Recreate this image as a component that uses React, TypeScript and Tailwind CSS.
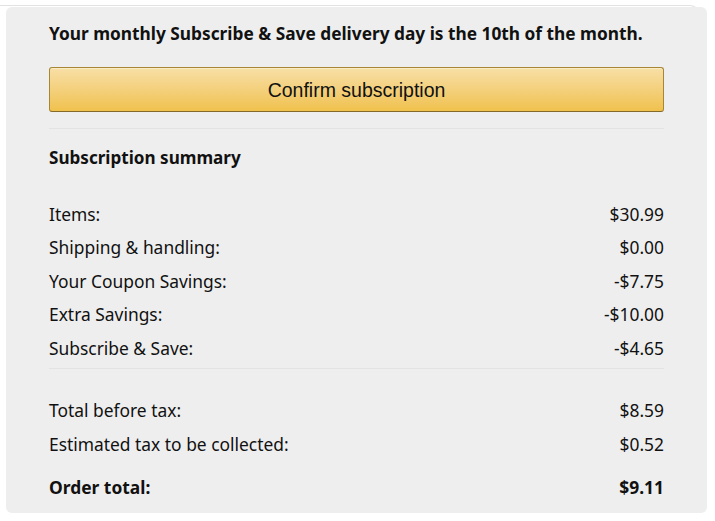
import React from 'react';

const rows = [
  { label: 'Items:', value: '$30.99' },
  { label: 'Shipping & handling:', value: '$0.00' },
  { label: 'Your Coupon Savings:', value: '-$7.75' },
  { label: 'Extra Savings:', value: '-$10.00' },
  { label: 'Subscribe & Save:', value: '-$4.65' },
];

const totals = [
  { label: 'Total before tax:', value: '$8.59' },
  { label: 'Estimated tax to be collected:', value: '$0.52' },
];

const App: React.FC = () => {
  return (
    <div className="w-[715px] h-[521px] bg-white overflow-hidden relative font-['Noto_Sans',sans-serif] text-[#111]">
      {/* outer frame edge */}
      <div className="absolute left-0 top-[5px] w-[700px] h-[30px] border-t border-r border-[#e2e2e2] rounded-tr-[10px]" />

      <div className="relative mx-[6px] mt-[7px] w-[701px] h-[506px] bg-[#eeeeee] rounded-[6px] px-[43px] pt-[15px]">
        <h2 className="text-[17.3px] leading-[24px] font-bold whitespace-nowrap">
          Your monthly Subscribe &amp; Save delivery day is the 10th of the month.
        </h2>

        <button className="mt-[21px] w-full h-[45px] rounded-[3px] border border-[#a88734] border-b-[#846a29] bg-gradient-to-b from-[#f7dfa5] to-[#f0c14b] shadow-[inset_0_1px_0_rgba(255,255,255,0.4)] font-['Liberation_Sans',Arial,sans-serif] text-[19.5px] leading-[24px] pt-[1px] text-[#111]">
          Confirm subscription
        </button>

        <div className="mt-[16px] h-px bg-[#e3e3e3]" />

        <h3 className="mt-[17px] text-[17.1px] leading-[24px] font-bold">Subscription summary</h3>

        <div className="mt-[27px]">
          {rows.map((r) => (
            <div key={r.label} className="flex justify-between items-center h-[33.5px] text-[17.4px]">
              <span>{r.label}</span>
              <span>{r.value}</span>
            </div>
          ))}
        </div>

        <div className="mt-[3px] h-px bg-[#e3e3e3]" />

        <div className="mt-[25px]">
          {totals.map((r) => (
            <div key={r.label} className="flex justify-between items-center h-[33.5px] text-[17.4px]">
              <span>{r.label}</span>
              <span>{r.value}</span>
            </div>
          ))}
          <div className="flex justify-between items-center h-[33.5px] mt-[10px] text-[17.4px] font-bold">
            <span>Order total:</span>
            <span>$9.11</span>
          </div>
        </div>
      </div>
    </div>
  );
};

export default App;
